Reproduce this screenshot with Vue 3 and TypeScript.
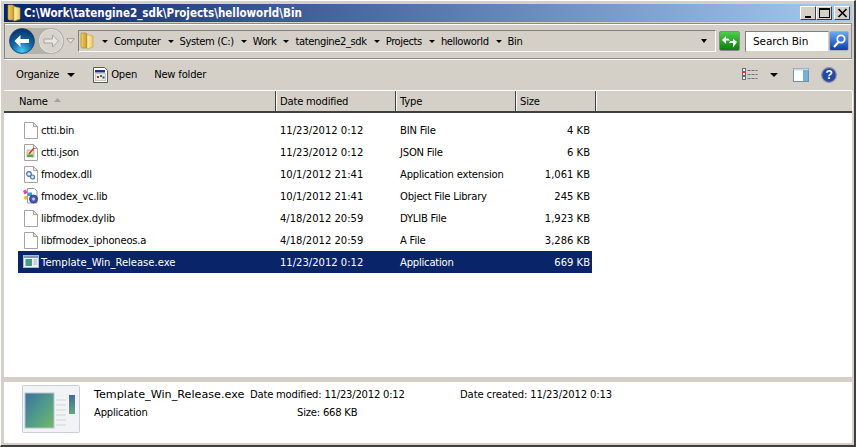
<template>
  <div class="window">
    <div class="titlebar">
      <svg class="title-icon" width="15" height="18" viewBox="0 0 15 18">
        <defs>
          <linearGradient id="folderBack" x1="0" y1="0" x2="1" y2="0">
            <stop offset="0" stop-color="#f0d060" />
            <stop offset="1" stop-color="#c8982c" />
          </linearGradient>
          <linearGradient id="folderFront" x1="0" y1="0" x2="1" y2="0">
            <stop offset="0" stop-color="#fdf3b4" />
            <stop offset="1" stop-color="#e8c860" />
          </linearGradient>
        </defs>
        <path d="M1 1h5l1 1v14H2l-1-1z" fill="url(#folderBack)" stroke="#a88428" stroke-width=".6" />
        <path d="M7 2.5l6 1.5v11l-6 2z" fill="url(#folderFront)" stroke="#c0a040" stroke-width=".6" />
      </svg>
      <span class="title-text">C:\Work\tatengine2_sdk\Projects\helloworld\Bin</span>
      <div class="caption-buttons">
        <button class="cap-btn"><span class="cap-min"></span></button>
        <button class="cap-btn"><span class="cap-max"></span></button>
        <button class="cap-btn cap-close">
          <svg width="11" height="10" viewBox="0 0 11 10">
            <path d="M1.5 1l8 8M9.5 1l-8 8" stroke="#000" stroke-width="1.7" fill="none" />
          </svg>
        </button>
      </div>
    </div>

    <div class="navbar">
      <div class="nav-orbs">
        <div class="capsule">
          <svg width="26" height="26" viewBox="0 0 26 26">
            <defs>
              <radialGradient id="backFill" cx="50%" cy="90%" r="80%">
                <stop offset="0" stop-color="#45d0f2" />
                <stop offset=".5" stop-color="#0f6cab" />
                <stop offset="1" stop-color="#0a3a70" />
              </radialGradient>
            </defs>
            <circle cx="13" cy="13" r="12.4" fill="url(#backFill)" stroke="#123e6c" stroke-width=".8" />
            <path d="M5.5 13l6-6v4h8.5v4h-8.5v4z" fill="#fff" />
          </svg>
          <svg class="orb-forward" width="26" height="26" viewBox="0 0 26 26">
            <circle cx="13" cy="13" r="12" fill="#d6d3cc" stroke="#fff" stroke-width=".8" />
            <circle cx="13" cy="13" r="12.5" fill="none" stroke="#a8a49c" stroke-width=".8" />
            <path d="M20.5 13l-6-6v4H6v4h8.5v4z" fill="#e8e6e0" stroke="#a09d95" stroke-width=".9" />
          </svg>
        </div>
        <svg class="nav-drop" width="9" height="6" viewBox="0 0 9 6">
          <path d="M.7.7h7.6L4.5 5z" fill="#eceae4" stroke="#8c8a84" stroke-width=".8" />
        </svg>
      </div>
      <div class="addressbar">
        <svg class="addr-folder" width="15" height="18" viewBox="0 0 15 18">
          <path d="M1 1h5l1 1v14H2l-1-1z" fill="url(#folderBack)" stroke="#a88428" stroke-width=".6" />
          <path d="M7 2.5l6 1.5v11l-6 2z" fill="url(#folderFront)" stroke="#c0a040" stroke-width=".6" />
        </svg>
        <div class="crumbs">
          <span v-for="c in crumbs" :key="c" class="crumb"><i class="caret"></i>{{ c }}</span>
        </div>
        <i class="caret addr-caret"></i>
      </div>
      <div class="refresh">
        <svg width="17" height="15" viewBox="0 0 17 15">
          <path d="M1 6l4-4v2.5h2.5L9 6.500H5V10z" fill="#fff" />
          <path d="M16 8l-4-3.500V7H9.500L8 9h4v4.500z" fill="#fff" />
        </svg>
      </div>
      <div class="searchbox">Search Bin</div>
      <div class="search-btn">
        <svg width="17" height="17" viewBox="0 0 17 17">
          <circle cx="10" cy="6" r="3.700" fill="#3c78d8" stroke="#fff" stroke-width="1.800" />
          <path d="M7.500 9l-4.500 5" stroke="#fff" stroke-width="2.300" />
        </svg>
      </div>
    </div>

    <div class="toolbar">
      <span class="tool tool-org">Organize<i class="caret tool-caret"></i></span>
      <span class="tool tool-open">
        <svg width="15" height="16" viewBox="0 0 15 16">
          <path d="M.5.500h11l3 3v12H.5z" fill="#fff" stroke="#5d5a55" />
          <path d="M2 3h10v2.500H2z" fill="#20308a" />
          <path d="M2.500 6.500h10v7h-10z" fill="#eceae4" stroke="#9a978f" stroke-width=".5" />
          <path d="M4 9h2v2H4z" fill="#c62828" />
          <path d="M7 8h2v2H7z" fill="#2e7d32" />
          <path d="M9.500 9.500h2v2h-2z" fill="#1f4fb5" />
        </svg>
        Open
      </span>
      <span class="tool tool-new">New folder</span>
      <div class="tool-right">
        <svg width="16" height="14" viewBox="0 0 16 14">
          <path d="M5.500 2.500h10M5.500 6.500h10M5.500 10.500h10" fill="none" stroke="#6a7282" stroke-dasharray="3 1" />
          <rect x=".5" y=".5" width="3" height="3" fill="#fff" stroke="#6a6a80" />
          <rect x=".5" y="4.500" width="3" height="3" fill="#fff" stroke="#c04040" />
          <rect x=".5" y="8.500" width="3" height="3" fill="#fff" stroke="#6a6a80" />
        </svg>
        <i class="caret right-caret"></i>
        <svg class="pane-icon" width="16" height="14" viewBox="0 0 16 14">
          <rect x=".5" y=".5" width="15" height="13" fill="#fff" stroke="#6f8fb5" />
          <rect x=".5" y=".5" width="15" height="2" fill="#c8d8e8" />
          <rect x="10" y="2" width="5" height="11" fill="#6fb3d8" />
        </svg>
        <svg class="help-icon" width="16" height="16" viewBox="0 0 16 16">
          <circle cx="8" cy="8" r="7.300" fill="#2448a8" stroke="#8b8b98" stroke-width="1.200" />
          <text x="8" y="12" text-anchor="middle" class="help-mark">?</text>
        </svg>
      </div>
    </div>

    <div class="list-header">
      <div class="col col-name">Name<svg class="sort" width="7" height="4" viewBox="0 0 7 4"><path d="M3.500 0l3.500 4H0z" fill="#a5a29a" /></svg></div>
      <div class="col col-date">Date modified</div>
      <div class="col col-type">Type</div>
      <div class="col col-size">Size</div>
      <div class="col col-rest"></div>
    </div>

    <div class="list">
      <div v-for="f in files" :key="f.name" class="row" :class="{ selected: f.selected }">
        <div class="cell cell-name">
          <svg class="file-icon" width="16" height="18" viewBox="0 0 16 18">
            <template v-if="f.icon === 'exe'">
              <rect x=".5" y="2.500" width="15" height="12" fill="#eef2f6" stroke="#a8bccc" />
              <rect x="1" y="3" width="14" height="2" fill="#7f98b4" />
              <rect x="2.500" y="6" width="6.500" height="7" fill="#4a9a8a" />
              <path d="M10.500 7h3.500M10.500 9h3.500M10.500 11h3.500" stroke="#9fb0c0" />
            </template>
            <template v-else-if="f.icon === 'lib'">
              <path d="M4.500 1.500h7l2.500 2.500v12h-9.500z" fill="#fff" stroke="#8f9fb0" />
              <path d="M0 4l3-1.500L4.500 6l-3 1.500z" fill="#e040c0" />
              <path d="M.5 10l3-1.500 1.500 3-3 1.500z" fill="#e8c020" />
              <path d="M5 5.500h4v3.500H5z" fill="#2f9fd0" />
              <circle cx="10.500" cy="12" r="4" fill="#4858b8" stroke="#283080" stroke-width=".8" />
              <circle cx="10.500" cy="12" r="1.500" fill="#c8d0f0" />
            </template>
            <template v-else>
              <path d="M1.500 1.500h9l4 4v12h-13z" fill="#fff" stroke="#a4a4a4" />
              <path d="M10.500 1.500v4h4z" fill="#e8e8e8" stroke="#a4a4a4" />
              <template v-if="f.icon === 'json'">
                <rect x="4" y="7" width="7" height="7" fill="#e0e0c0" stroke="#8a8a60" stroke-width=".5" />
                <path d="M6 11l5-6" stroke="#c83030" stroke-width="1.300" />
                <path d="M4 11.500h6V14H4z" fill="#58a838" />
              </template>
              <template v-if="f.icon === 'dll'">
                <circle cx="6" cy="9" r="2.300" fill="#e8f0ff" stroke="#4a70a8" stroke-width="1.200" />
                <circle cx="9.500" cy="12" r="2" fill="#e8f0ff" stroke="#4a70a8" stroke-width="1.200" />
              </template>
            </template>
          </svg>
          <span class="name-text">{{ f.name }}</span>
        </div>
        <div class="cell cell-date">{{ f.date }}</div>
        <div class="cell cell-type">{{ f.type }}</div>
        <div class="cell cell-size">{{ f.size }}</div>
      </div>
    </div>

    <div class="details">
      <svg class="thumb" width="58" height="48" viewBox="0 0 58 48">
        <defs>
          <linearGradient id="thumbFill" x1="0" y1="0" x2="1" y2="1">
            <stop offset="0" stop-color="#3f6f9f" />
            <stop offset=".5" stop-color="#4f9a8c" />
            <stop offset="1" stop-color="#74b868" />
          </linearGradient>
          <linearGradient id="thumbSide" x1="0" y1="0" x2="0" y2="1">
            <stop offset="0" stop-color="#45689c" />
            <stop offset="1" stop-color="#63a87c" />
          </linearGradient>
        </defs>
        <rect x=".5" y=".5" width="57" height="47" rx="1" fill="#f1f3f6" stroke="#c9ced6" />
        <rect x="3" y="8" width="29" height="35" fill="url(#thumbFill)" stroke="#b8c4cc" />
        <path d="M34 15h10M34 20h10M34 25h10M34 30h10M34 35h10M34 40h10" stroke="#e2e4e6" stroke-width="2" />
        <rect x="47" y="10" width="6" height="19" fill="url(#thumbSide)" />
      </svg>
      <div class="meta meta-name">
        <div class="meta-title">Template_Win_Release.exe</div>
        <div class="meta-sub">Application</div>
      </div>
      <div class="meta meta-mod">
        <div>Date modified: 11/23/2012 0:12</div>
        <div class="size-line">Size: 668 KB</div>
      </div>
      <div class="meta meta-created">Date created: 11/23/2012 0:13</div>
    </div>
  </div>
</template>

<script setup lang="ts">
interface FileRow {
  name: string;
  date: string;
  type: string;
  size: string;
  icon: string;
  selected?: boolean;
}

const crumbs: string[] = ['Computer', 'System (C:)', 'Work', 'tatengine2_sdk', 'Projects', 'helloworld', 'Bin'];

const files: FileRow[] = [
  { name: 'ctti.bin', date: '11/23/2012 0:12', type: 'BIN File', size: '4 KB', icon: 'blank' },
  { name: 'ctti.json', date: '11/23/2012 0:12', type: 'JSON File', size: '6 KB', icon: 'json' },
  { name: 'fmodex.dll', date: '10/1/2012 21:41', type: 'Application extension', size: '1,061 KB', icon: 'dll' },
  { name: 'fmodex_vc.lib', date: '10/1/2012 21:41', type: 'Object File Library', size: '245 KB', icon: 'lib' },
  { name: 'libfmodex.dylib', date: '4/18/2012 20:59', type: 'DYLIB File', size: '1,923 KB', icon: 'blank' },
  { name: 'libfmodex_iphoneos.a', date: '4/18/2012 20:59', type: 'A File', size: '3,286 KB', icon: 'blank' },
  { name: 'Template_Win_Release.exe', date: '11/23/2012 0:12', type: 'Application', size: '669 KB', icon: 'exe', selected: true },
];
</script>

<style>
html,
body {
  margin: 0;
  background: #d4d0c8;
}
</style>

<style scoped>
.window {
  width: 856px;
  height: 447px;
  box-sizing: border-box;
  display: flex;
  flex-direction: column;
  padding: 3px 2px 2px 3px;
  background: #d4d0c8;
  border-top: 1px solid #fff;
  border-left: 1px solid #fff;
  border-right: 2px solid #404040;
  border-bottom: 2px solid #404040;
  font-family: "DejaVu Sans", "Liberation Sans", sans-serif;
  font-size: 10px;
  letter-spacing: -0.2px;
  color: #000;
  overflow: hidden;
}

.titlebar {
  height: 18px;
  flex: none;
  display: flex;
  align-items: center;
  padding: 0 2px 0 3px;
  background: linear-gradient(to right, #0a246a, #a6caf0);
  color: #fff;
  font-weight: bold;
  font-size: 11.5px;
  font-stretch: condensed;
  letter-spacing: 0;
  white-space: nowrap;
}

.title-icon {
  margin-right: 2px;
}

.caption-buttons {
  margin-left: auto;
  display: flex;
}

.cap-btn {
  width: 16px;
  height: 14px;
  padding: 0;
  margin: 0;
  display: flex;
  align-items: center;
  justify-content: center;
  background: #d4d0c8;
  border: 1px solid;
  border-color: #fff #404040 #404040 #fff;
}

.cap-close {
  margin-left: 2px;
}

.cap-min {
  width: 6px;
  height: 2px;
  background: #000;
  margin-top: 7px;
}

.cap-max {
  width: 9px;
  height: 7px;
  border: 1px solid #000;
  border-top-width: 2px;
}

.navbar {
  height: 36px;
  flex: none;
  box-sizing: border-box;
  display: flex;
  align-items: center;
  margin-top: 1px;
  border: 1px solid #8c8a84;
  box-shadow: 0 1px 0 #fff, inset 0 1px 0 #fff;
}

.nav-orbs {
  display: flex;
  align-items: center;
  width: 73px;
  flex: none;
  padding-left: 4px;
  box-sizing: border-box;
}

.capsule {
  display: flex;
  width: 55px;
  height: 26px;
  justify-content: space-between;
  border-radius: 13px;
  background: #b5b2aa;
}

.nav-drop {
  margin-left: 2px;
}

.addressbar {
  width: 638px;
  height: 22px;
  flex: none;
  box-sizing: border-box;
  display: flex;
  align-items: center;
  border: 1px solid;
  border-color: #808080 #fff #fff #808080;
  padding-left: 1px;
}

.crumbs {
  display: flex;
  margin-left: 7px;
  letter-spacing: -0.4px;
}

.crumb {
  display: flex;
  align-items: center;
  margin-right: 7px;
}

.caret {
  display: inline-block;
  width: 0;
  height: 0;
  border-left: 4px solid transparent;
  border-right: 4px solid transparent;
  border-top: 4px solid #000;
}

.crumb .caret {
  margin-right: 6px;
  border-left-width: 3px;
  border-right-width: 3px;
  border-top-width: 3px;
}

.addr-caret {
  margin-left: auto;
  margin-right: 8px;
  border-left-width: 3.5px;
  border-right-width: 3.5px;
}

.refresh {
  width: 21px;
  height: 20px;
  flex: none;
  display: flex;
  align-items: center;
  justify-content: center;
  margin-left: 3px;
  background: linear-gradient(#4ccc4c, #0c800c);
  border: 1px solid #8a8a8a;
  box-sizing: border-box;
  border-radius: 2px;
}

.searchbox {
  width: 84px;
  height: 21px;
  flex: none;
  box-sizing: border-box;
  display: flex;
  align-items: center;
  margin-left: 5px;
  padding-left: 7px;
  background: #fff;
  border: 1px solid;
  border-color: #808080 #d4d0c8 #d4d0c8 #808080;
  font-size: 10.5px;
  letter-spacing: -0.1px;
}

.search-btn {
  width: 20px;
  height: 20px;
  flex: none;
  display: flex;
  align-items: center;
  justify-content: center;
  background: linear-gradient(#6aa8f0, #0c3fb0);
  border: 1px solid #a8b0c0;
  box-sizing: border-box;
  border-radius: 2px;
}

.toolbar {
  height: 31px;
  flex: none;
  display: flex;
  align-items: center;
  padding-left: 12px;
}

.tool {
  display: flex;
  align-items: center;
}

.tool-caret {
  margin-left: 8px;
}

.tool-open {
  margin-left: 18px;
  gap: 3px;
}

.tool-new {
  margin-left: 17px;
}

.tool-right {
  margin-left: auto;
  display: flex;
  align-items: center;
  padding-right: 15px;
}

.right-caret {
  margin-left: 12px;
}

.pane-icon {
  margin-left: 15px;
}

.help-icon {
  margin-left: 12px;
}

.help-mark {
  font-family: "Liberation Sans", sans-serif;
  font-size: 12px;
  font-weight: bold;
  fill: #fff;
}

.list-header {
  height: 23px;
  flex: none;
  box-sizing: border-box;
  display: flex;
  border-top: 1px solid #fff;
  border-bottom: 2px solid #404040;
}

.col {
  box-sizing: border-box;
  display: flex;
  align-items: center;
  border-right: 1px solid #404040;
  box-shadow: 1px 0 0 #fff;
  padding-left: 4px;
}

.col-name {
  width: 272px;
  padding-left: 15px;
}

.col-date,
.col-type {
  width: 120px;
}

.col-size {
  width: 80px;
}

.col-rest {
  flex: 1;
  border-right: 0;
}

.sort {
  margin-left: 6px;
  margin-bottom: 2px;
}

.list {
  flex: 1;
  min-height: 0;
  background: #fff;
  padding: 6px 0 0 14px;
}

.row {
  width: 574px;
  height: 22px;
  display: flex;
  align-items: center;
}

.selected {
  background: #0a246a;
  color: #fff;
}

.selected .name-text {
  letter-spacing: 0;
}

.cell {
  box-sizing: border-box;
  white-space: nowrap;
}

.cell-name {
  width: 258px;
  display: flex;
  align-items: center;
  padding-left: 5px;
}

.file-icon {
  flex: none;
  margin-right: 2px;
}

.cell-date,
.cell-type {
  width: 120px;
  padding-left: 4px;
}

.cell-date,
.cell-size {
  letter-spacing: 0;
}

.cell-size {
  width: 76px;
  text-align: right;
  padding-right: 2px;
}

.details {
  height: 66px;
  flex: none;
  box-sizing: border-box;
  display: flex;
  background: #fff;
  border-top: 5px solid #d4d0c8;
  padding: 3px 0 0 18px;
}

.thumb {
  flex: none;
}

.meta {
  white-space: nowrap;
  line-height: 18px;
  margin-top: 1px;
}

.meta-name {
  width: 156px;
  margin-left: 14px;
}

.meta-title {
  font-size: 11.2px;
  letter-spacing: 0;
}

.meta-mod {
  width: 210px;
}

.meta-created {
  letter-spacing: -0.1px;
}

.size-line {
  padding-left: 47px;
}
</style>
